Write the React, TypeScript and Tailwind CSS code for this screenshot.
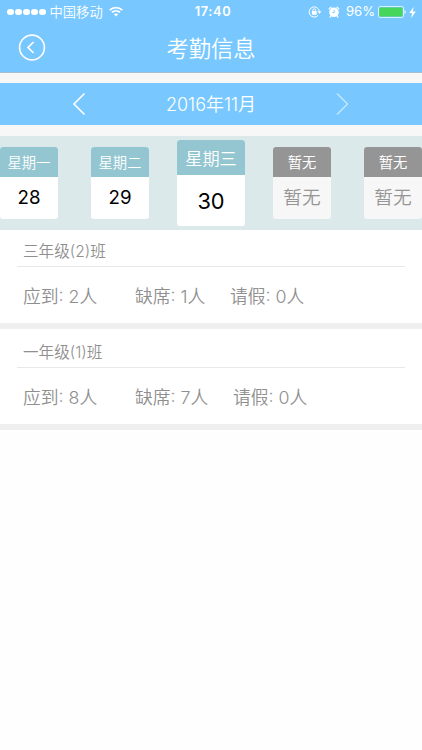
import type { FC } from 'react';

interface Day {
  label: string;
  value: string;
  state: 'normal' | 'active' | 'empty';
}

interface ClassAttendance {
  name: string;
  expected: number;
  absent: number;
  leave: number;
}

const DAYS: Day[] = [
  { label: '星期一', value: '28', state: 'normal' },
  { label: '星期二', value: '29', state: 'normal' },
  { label: '星期三', value: '30', state: 'active' },
  { label: '暂无', value: '暂无', state: 'empty' },
  { label: '暂无', value: '暂无', state: 'empty' },
];

const CLASSES: ClassAttendance[] = [
  { name: '三年级(2)班', expected: 2, absent: 1, leave: 0 },
  { name: '一年级(1)班', expected: 8, absent: 7, leave: 0 },
];

const StatusBar: FC = () => (
  <div className="grid h-6 grid-cols-[1fr_auto_1fr] items-center pl-[7px] pr-[6px]">
    <div className="flex items-center">
      <div className="flex gap-[1.5px]">
        {[0, 1, 2, 3, 4].map((i) => (
          <span key={i} className="h-[6.5px] w-[6.5px] rounded-full bg-white" />
        ))}
      </div>
      <span className="ml-[4px] pt-px text-[13.3px] font-[350] leading-none">中国移动</span>
      <svg className="ml-[6px]" width="14" height="11" viewBox="0 0 14 11" fill="none" stroke="white" strokeWidth="1.7">
        <path d="M0.7 4.1C4.2 0.7 9.8 0.7 13.3 4.1" />
        <path d="M3 6.4C5.3 4.3 8.7 4.3 11 6.4" />
        <path d="M4.9 8.2C6.1 7.2 7.9 7.2 9.1 8.2L7 10.4Z" fill="white" stroke="none" />
      </svg>
    </div>
    <span className="pl-[3px] pt-px text-[12.8px] font-semibold leading-none tracking-[0.6px]">17:40</span>
    <div className="flex items-center justify-end">
      {/* rotation lock */}
      <svg width="14" height="12" viewBox="0 0 14 12" fill="none" stroke="white" strokeWidth="1">
        <path d="M10.2 9.2A5.1 5.1 0 1 1 11.3 5.2" />
        <path d="M9.4 5.2H13.4L11.4 7.8Z" fill="white" stroke="none" />
        <rect x="3.9" y="5.1" width="4.8" height="3.6" rx="0.4" fill="white" stroke="none" />
        <path d="M4.9 5.3V4.2A1.4 1.4 0 0 1 7.7 4.2V5.3" />
      </svg>
      {/* alarm */}
      <svg className="ml-[6px]" width="12" height="12" viewBox="0 0 12 12">
        <circle cx="6" cy="6.3" r="4.8" fill="white" />
        <path d="M1.2 2.9L2.9 1.3M10.8 2.9L9.1 1.3M2.8 10.1L2.1 11M9.2 10.1L9.9 11" stroke="white" strokeWidth="1.3" strokeLinecap="round" />
        <path d="M6.2 3.8V6.6H4.2" stroke="#78c8ff" strokeWidth="0.9" fill="none" />
      </svg>
      <span className="ml-[6px] text-[13.1px] font-normal leading-none">96%</span>
      <svg className="ml-[3px]" width="28" height="12" viewBox="0 0 28 12">
        <rect x="0.5" y="0.5" width="25" height="11" rx="1.6" fill="none" stroke="white" strokeOpacity="0.7" />
        <rect x="1.3" y="1.4" width="23.2" height="9.2" rx="0.6" fill="#47d65c" />
        <path d="M26.6 4.1C28.1 4.6 28.1 7.4 26.6 7.9Z" fill="white" />
      </svg>
      <svg className="ml-[3px]" width="7" height="11" viewBox="0 0 7 11" fill="white">
        <path d="M4.6 0L0.2 6.1H3L2.2 11L6.8 4.5H3.9Z" />
      </svg>
    </div>
  </div>
);

const Header: FC = () => (
  <header className="h-[73px] border-b border-[#a3bed0] bg-[#78c8ff] text-white">
    <StatusBar />
    <div className="grid h-12 grid-cols-[1fr_auto_1fr] items-center pl-[18px] pr-[18px]">
      <button aria-label="返回" className="w-7">
        <svg width="28" height="28" viewBox="0 0 28 28" fill="none" stroke="white">
          <circle cx="14" cy="13.5" r="12.4" strokeWidth="1.6" />
          <path d="M15.6 8L10 13.5L15.6 19" strokeWidth="1.7" />
        </svg>
      </button>
      <h1 className="pt-[2px] text-[22.3px] font-[350] leading-none">考勤信息</h1>
    </div>
  </header>
);

const MonthBar: FC = () => (
  <div className="flex h-[42px] items-center justify-between bg-[#78c8ff] pl-[72px] pr-[72px] text-white">
    <button aria-label="上个月">
      <svg width="14" height="24" viewBox="0 0 14 24" fill="none" stroke="white" strokeWidth="1.6">
        <path d="M12.5 1.5L2 12L12.5 22.5" />
      </svg>
    </button>
    <span className="pt-[2px] text-[18px] font-[350] leading-none">2016年11月</span>
    <button aria-label="下个月" className="opacity-60">
      <svg width="14" height="24" viewBox="0 0 14 24" fill="none" stroke="white" strokeWidth="1.3">
        <path d="M1 1.5L11.5 12L1 22.5" />
      </svg>
    </button>
  </div>
);

const DayCard: FC<{ day: Day }> = ({ day }) => {
  if (day.state === 'active') {
    return (
      <div className="h-[86px] w-[68px] overflow-hidden rounded-[3px] bg-white">
        <div className="flex h-[35px] items-center justify-center bg-[#93c6d0] pt-[3px] text-[17.2px] font-[350] leading-none text-white">{day.label}</div>
        <div className="flex h-[51px] items-center justify-center pt-[2px] text-[21.8px] font-normal leading-none text-black">{day.value}</div>
      </div>
    );
  }
  const empty = day.state === 'empty';
  return (
    <div className={`h-[72px] w-[58px] overflow-hidden rounded-[3px] ${empty ? 'bg-[#f7f7f7]' : 'bg-white'}`}>
      <div className={`flex h-[30px] items-center justify-center pt-[3px] text-[14.3px] leading-none text-white ${empty ? 'bg-[#959595] font-normal' : 'bg-[#93c6d0] font-[350]'}`}>
        {day.label}
      </div>
      <div className={`flex h-[42px] items-center justify-center text-[18.7px] leading-none ${empty ? 'pt-px font-[350] text-[#959595]' : 'pt-px font-normal text-black'}`}>
        {day.value}
      </div>
    </div>
  );
};

const ClassSection: FC<{ item: ClassAttendance; first: boolean }> = ({ item, first }) => (
  <section className="border-b-[6px] border-[#efefef] bg-white text-[#8f8f8f]">
    <h2
      className={`mx-[17px] flex items-center border-b border-[#e8e8e8] pl-[6px] text-[15.6px] font-[350] leading-none ${
        first ? 'h-[37px] pt-[8px]' : 'h-[39px] pt-[10px]'
      }`}
    >
      {item.name}
    </h2>
    <div className="flex h-[56px] items-center pl-[23px] pt-[3px] text-[17.8px] font-[350] leading-none">
      <span className="w-[112px]">应到: {item.expected}人</span>
      <span className={first ? 'w-[95px]' : 'w-[98px]'}>缺席: {item.absent}人</span>
      <span>请假: {item.leave}人</span>
    </div>
  </section>
);

export default function App() {
  return (
    <div className="h-[750px] w-[422px] overflow-hidden bg-[#fefefe] font-['Inter','Noto_Sans_CJK_SC',sans-serif]">
      <Header />
      <div className="bg-[#f7f7f7] pb-[11px] pt-[10px]">
        <MonthBar />
      </div>
      <div className="flex h-[94px] items-center justify-center bg-[#dce9ea]">
        {DAYS.map((day, i) => (
          <div key={i} className="flex w-[91px] shrink-0 justify-center">
            <DayCard day={day} />
          </div>
        ))}
      </div>
      {CLASSES.map((item, i) => (
        <ClassSection key={item.name} item={item} first={i === 0} />
      ))}
    </div>
  );
}
